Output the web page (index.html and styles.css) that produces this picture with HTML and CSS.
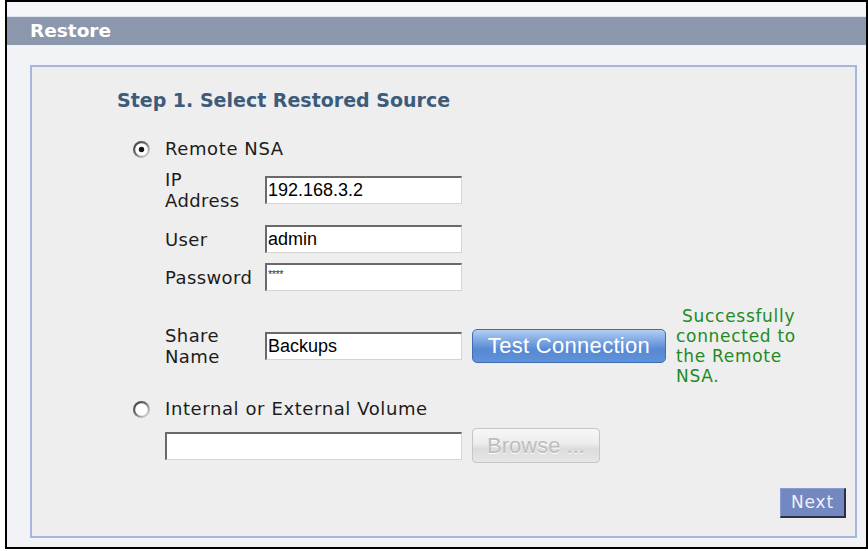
FILE: index.html
```html
<!DOCTYPE html>
<html>
<head>
<meta charset="utf-8">
<link rel="stylesheet" href="styles.css">
</head>
<body>
<div class="frame">
  <div class="topband"></div>
  <div class="header">Restore</div>
  <div class="box">
    <div class="title">Step 1. Select Restored Source</div>
    <div class="options">
      <div class="radio-row">
        <svg class="radio" width="19" height="19" viewBox="0 0 19 19">
          <defs>
            <linearGradient id="ring1" x1="0" y1="0" x2="1" y2="1">
              <stop offset="0" stop-color="#2e2e2e"/>
              <stop offset="0.5" stop-color="#7a7a7a"/>
              <stop offset="1" stop-color="#f6f6f6"/>
            </linearGradient>
          </defs>
          <circle cx="9.5" cy="9.5" r="8.5" fill="url(#ring1)"/>
          <circle cx="9.5" cy="9.5" r="6.3" fill="#ffffff"/>
          <circle cx="9.5" cy="9.5" r="2.7" fill="#111111"/>
        </svg>
        <span>Remote NSA</span>
      </div>
      <div class="field ip">
        <div class="label">IP<br>Address</div>
        <div class="input">192.168.3.2</div>
      </div>
      <div class="field user">
        <div class="label">User</div>
        <div class="input">admin</div>
      </div>
      <div class="field pw">
        <div class="label">Password</div>
        <div class="input pwd">****</div>
      </div>
      <div class="field share">
        <div class="label">Share<br>Name</div>
        <div class="input">Backups</div>
        <div class="btn-test">Test Connection</div>
        <div class="status">&nbsp;Successfully connected to the Remote NSA.</div>
      </div>
      <div class="radio-row r2">
        <svg class="radio" width="19" height="19" viewBox="0 0 19 19">
          <defs>
            <linearGradient id="ring2" x1="0" y1="0" x2="1" y2="1">
              <stop offset="0" stop-color="#2e2e2e"/>
              <stop offset="0.5" stop-color="#7a7a7a"/>
              <stop offset="1" stop-color="#f6f6f6"/>
            </linearGradient>
          </defs>
          <circle cx="9.5" cy="9.5" r="8.5" fill="url(#ring2)"/>
          <circle cx="9.5" cy="9.5" r="6.3" fill="#ffffff"/>
        </svg>
        <span>Internal or External Volume</span>
      </div>
      <div class="field vol">
        <div class="input wide"></div>
        <div class="btn-browse">Browse ...</div>
      </div>
    </div>
    <div class="actions">
      <div class="btn-next">Next</div>
    </div>
  </div>
</div>
</body>
</html>
```

FILE: styles.css
```css
html, body {
  margin: 0;
  padding: 0;
  background: #ffffff;
}

body {
  font-family: "DejaVu Sans", Verdana, sans-serif;
  color: #1c1c1c;
}

.frame {
  box-sizing: border-box;
  margin-left: 5px;
  width: 863px;
  height: 549px;
  border: 2px solid #000000;
  background: #f2f3f7;
  display: flex;
  flex-direction: column;
}

.topband {
  height: 14px;
  border-bottom: 1px solid #e0e5ef;
  background: #f4f5f8;
}

.header {
  height: 28px;
  line-height: 28px;
  background: #8b97ad;
  color: #ffffff;
  font-weight: bold;
  font-size: 18.5px;
  padding-left: 23px;
}

.box {
  flex: 1;
  margin: 20px 9px 9px 23px;
  border: 2px solid #a7b6dc;
  background: #eeeeee;
  display: flex;
  flex-direction: column;
}

.title {
  margin-top: 22px;
  padding-left: 85px;
  font-size: 19px;
  line-height: 22px;
  font-weight: bold;
  color: #3d5b7b;
}

.options {
  margin-top: 27px;
  margin-left: 100px;
  display: flex;
  flex-direction: column;
}

.radio-row {
  display: flex;
  align-items: center;
  font-size: 18px;
  letter-spacing: 0.6px;
  line-height: 22px;
  height: 22px;
}

.radio {
  width: 19px;
  height: 19px;
  margin-right: 14px;
  flex: none;
}

.r2 {
  margin-top: 12px;
}

.field {
  display: flex;
  align-items: center;
  margin-left: 33px;
  font-size: 18px;
}

.label {
  width: 100px;
  line-height: 21px;
  letter-spacing: 0.4px;
  flex: none;
}

.ip { margin-top: 9px; }
.user { margin-top: 14px; }
.pw { margin-top: 10px; }
.share { margin-top: 15px; }
.vol { margin-top: 8px; }

.input {
  box-sizing: border-box;
  width: 197px;
  height: 28px;
  background: #ffffff;
  border-top: 2px solid #6a6a6a;
  border-left: 2px solid #6a6a6a;
  border-right: 1px solid #d4d4d4;
  border-bottom: 1px solid #d4d4d4;
  font-family: "Liberation Sans", Arial, sans-serif;
  font-size: 18px;
  line-height: 25px;
  padding-left: 1px;
  color: #000000;
  flex: none;
}

.input.pwd {
  font-size: 11px;
  line-height: 14px;
  padding-top: 2px;
  color: #333333;
  letter-spacing: -0.5px;
}

.input.wide {
  width: 297px;
}

.btn-test {
  box-sizing: border-box;
  margin-left: 10px;
  width: 194px;
  height: 34px;
  border: 1px solid #3f6db2;
  border-radius: 5px;
  background: linear-gradient(#b4cef2 0%, #7ca6e2 35%, #5889d4 60%, #5e92da 100%);
  color: #ffffff;
  font-family: "Liberation Sans", Arial, sans-serif;
  font-size: 22px;
  letter-spacing: 0.3px;
  line-height: 32px;
  text-align: center;
  flex: none;
}

.status {
  margin-left: 10px;
  width: 142px;
  font-size: 17px;
  letter-spacing: 0.7px;
  line-height: 20px;
  color: #1f8a1f;
}

.btn-browse {
  box-sizing: border-box;
  margin-left: 10px;
  width: 128px;
  height: 35px;
  border: 1px solid #c6c6c6;
  border-radius: 4px;
  background: linear-gradient(#f7f7f7 0%, #ececec 45%, #dcdcdc 60%, #e6e6e6 100%);
  color: #bdbdbd;
  font-family: "Liberation Sans", Arial, sans-serif;
  font-size: 22px;
  line-height: 33px;
  text-align: center;
  text-shadow: 0 1px 0 #ffffff;
  flex: none;
}

.actions {
  margin-top: 25px;
  display: flex;
  justify-content: flex-end;
  padding-right: 9px;
}

.btn-next {
  box-sizing: border-box;
  width: 66px;
  height: 30px;
  background: #7387c1;
  border-top: 1px solid #8a9bd0;
  border-left: 1px solid #8a9bd0;
  border-right: 2px solid #2a2f45;
  border-bottom: 2px solid #2a2f45;
  color: #eef1fa;
  font-size: 17px;
  letter-spacing: 0.8px;
  line-height: 27px;
  text-align: center;
}
```
